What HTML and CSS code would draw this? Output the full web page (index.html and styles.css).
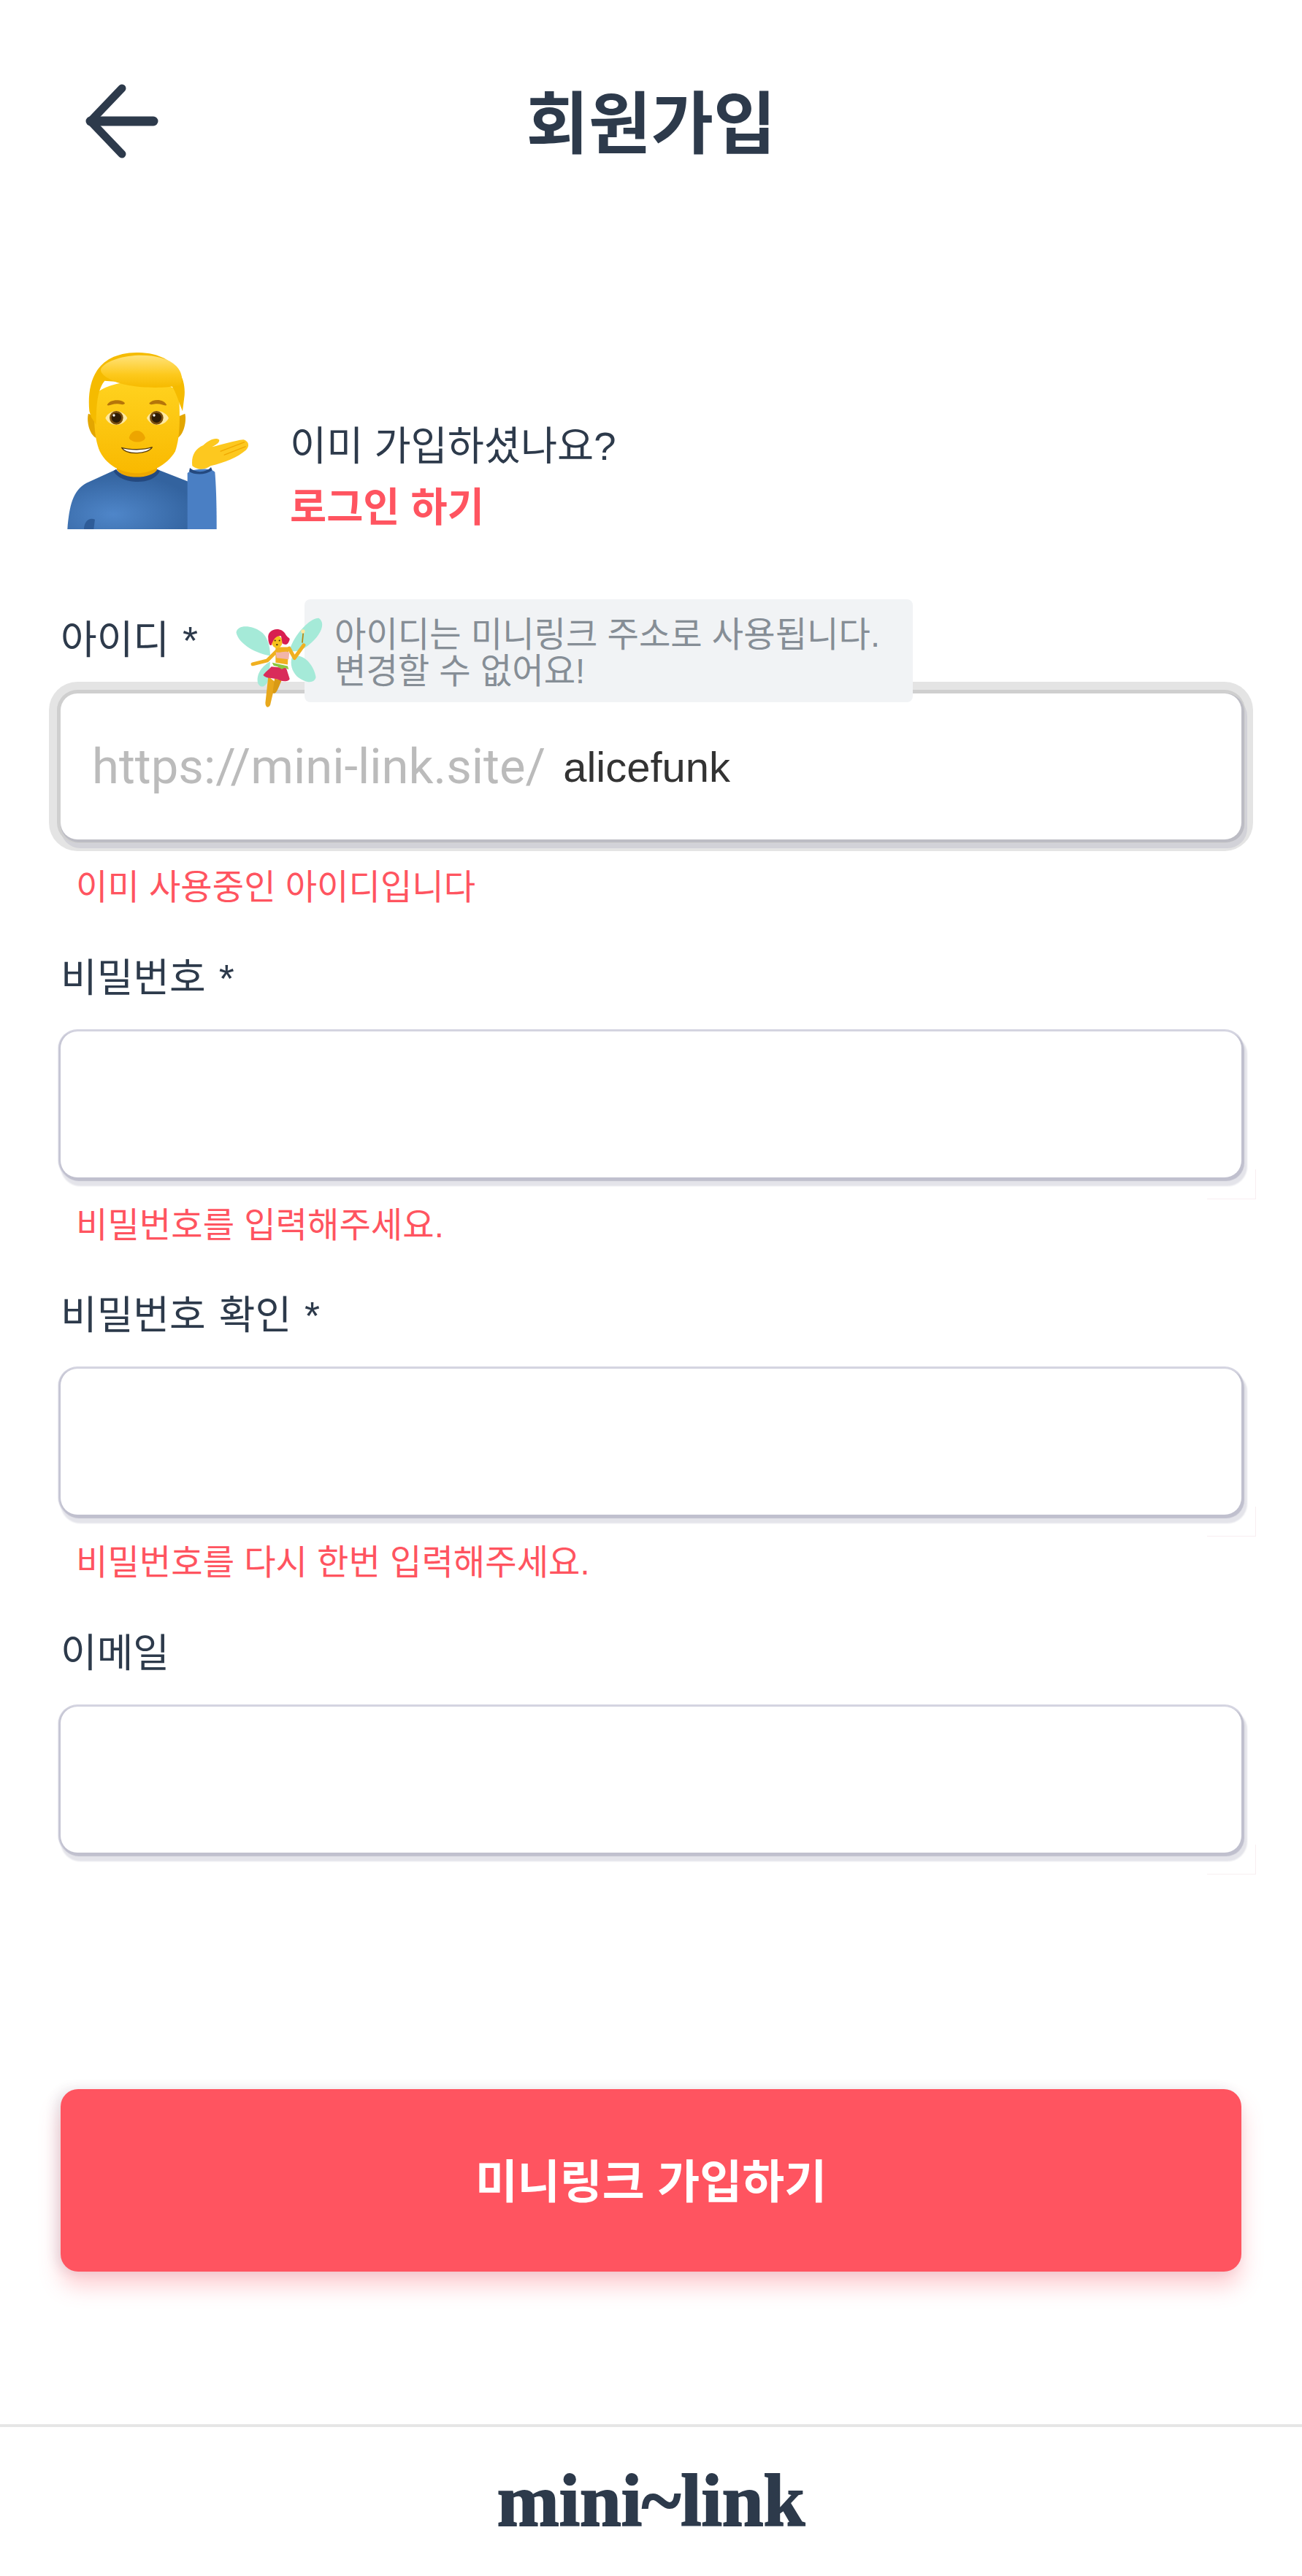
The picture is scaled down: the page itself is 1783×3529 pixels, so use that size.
FILE: index.html
```html
<!DOCTYPE html>
<html lang="ko">
<head>
    <meta charset="UTF-8">
    <meta name="viewport" content="width=device-width, initial-scale=1.0">
    <title>회원가입 - mini~link</title>
    <link rel="stylesheet" href="styles.css">
</head>
<body>

    <header class="top-bar">
        <a class="back-link" href="#" aria-label="뒤로">
            <svg width="100" height="102" viewBox="0 0 100 102" fill="none" stroke="#2d3a4b" stroke-linecap="round" stroke-linejoin="round">
                <path d="M50 6 L7 51 L50 96" stroke-width="11"/>
                <path d="M7 51 H93" stroke-width="13"/>
            </svg>
        </a>
        <h1 class="page-title">회원가입</h1>
    </header>

    <main class="signup">
        <section class="intro">
            <svg class="intro-man" width="249" height="242" viewBox="21 24 747 726">
                <defs>
                    <radialGradient id="sweater" cx="0.38" cy="0.75" r="0.7">
                        <stop offset="0" stop-color="#4f86c9"/>
                        <stop offset="1" stop-color="#33639f"/>
                    </radialGradient>
                    <linearGradient id="hair" x1="0" y1="0" x2="0" y2="1">
                        <stop offset="0" stop-color="#ffe27a"/>
                        <stop offset="0.6" stop-color="#fdc91c"/>
                        <stop offset="1" stop-color="#f6ba00"/>
                    </linearGradient>
                    <linearGradient id="skin" x1="0" y1="0" x2="0" y2="1">
                        <stop offset="0" stop-color="#ffd21f"/>
                        <stop offset="1" stop-color="#f9b900"/>
                    </linearGradient>
                </defs>
                <path d="M22 750 C30 650 45 590 100 560 L215 508 C260 560 350 560 400 508 L520 555 L520 750 Z" fill="url(#sweater)"/>
                <path d="M515 520 C530 500 610 495 628 515 C635 600 635 700 635 750 L515 750 Z" fill="#4a7fc4"/>
                <path d="M90 750 C90 720 110 700 135 710 L130 750 Z" fill="#2e5c98"/>
                <path d="M225 480 H390 V510 C365 550 250 550 225 505 Z" fill="#eda800"/>
                <path d="M212 510 C235 565 375 575 402 510 L392 503 C370 545 250 548 222 503 Z" fill="#24497f"/>
                <path d="M108 275 C100 300 110 360 140 375 L145 290 Z" fill="#e3a600"/>
                <path d="M505 275 C512 300 502 360 474 375 L470 290 Z" fill="#e3a600"/>
                <path d="M135 200 C130 300 130 370 155 430 C190 500 260 520 310 520 C360 520 430 490 465 430 C485 370 485 300 480 190 C430 120 180 130 135 200 Z" fill="url(#skin)"/>
                <path d="M112 265 C100 130 150 22 315 24 C450 26 510 110 503 200 L495 265 C480 230 470 190 450 160 L175 140 C150 170 140 220 140 320 L120 290 Z" fill="#f5bb00"/>
                <path d="M160 90 C200 30 400 10 470 80 C495 105 500 150 480 160 C400 175 250 170 190 130 C170 118 155 105 160 90 Z" fill="url(#hair)"/>
                <path d="M185 240 C195 215 245 215 258 232 C255 240 245 238 230 235 C210 232 195 245 185 240 Z" fill="#b5750a"/>
                <path d="M358 232 C375 212 420 215 430 240 C420 245 405 232 385 235 C370 238 360 240 358 232 Z" fill="#b5750a"/>
                <path d="M178 293 C195 255 250 255 268 293 C250 330 195 330 178 293 Z" fill="#ffe9a0"/>
                <path d="M348 293 C365 255 420 255 438 293 C420 330 365 330 348 293 Z" fill="#ffe9a0"/>
                <circle cx="223" cy="292" r="28" fill="#7a4e0e"/>
                <circle cx="223" cy="292" r="20" fill="#2e1c05"/>
                <circle cx="388" cy="292" r="28" fill="#7a4e0e"/>
                <circle cx="388" cy="292" r="20" fill="#2e1c05"/>
                <circle cx="213" cy="282" r="5" fill="#fff"/>
                <circle cx="378" cy="282" r="5" fill="#fff"/>
                <path d="M275 375 C285 335 330 335 342 375 C335 397 285 397 275 375 Z" fill="#eda500"/>
                <path d="M245 415 C280 425 335 425 370 413 C355 442 265 447 245 415 Z" fill="#fff" stroke="#5a3d0a" stroke-width="4" stroke-linejoin="round"/>
                <path d="M535 490 C530 450 545 420 580 405 C600 385 630 370 645 382 C650 392 630 405 615 412 C650 405 710 385 745 382 C770 390 770 410 755 425 C720 455 670 475 610 490 C590 505 560 510 535 490 Z" fill="#fdc81f"/>
                <path d="M650 430 L750 392 M665 445 L755 410" stroke="#f0a800" stroke-width="4" fill="none"/>
                <path d="M525 498 C550 520 590 518 612 495 L617 508 C590 528 545 528 522 513 Z" fill="#24497f"/>
            </svg>
            <div class="intro-text">
                <p class="intro-line">이미 가입하셨나요?</p>
                <a class="intro-login" href="#">로그인 하기</a>
            </div>
        </section>

        <form class="signup-form">
            <div class="field">
                <label class="field-label">아이디 *</label>
                <svg class="fairy" width="120" height="123" viewBox="100 78 358 370">
                    <path d="M240 235 C190 230 110 190 100 140 C105 105 165 110 200 135 C225 150 240 190 240 235 Z" fill="#a5ead8"/>
                    <path d="M320 210 C340 150 400 80 440 80 C470 100 450 150 400 190 C370 215 340 225 320 210 Z" fill="#a5ead8"/>
                    <path d="M240 260 C200 280 180 320 190 350 C205 375 225 360 235 330 Z" fill="#a5ead8"/>
                    <path d="M330 240 C370 220 420 270 428 325 C420 355 380 345 350 320 C330 300 320 270 330 240 Z" fill="#a5ead8"/>
                    <path d="M232 320 L220 430 C220 454 240 452 242 430 L262 345 Z" fill="#e8a81c"/>
                    <path d="M258 330 L250 388 C264 400 272 370 288 335 Z" fill="#d99a14"/>
                    <path d="M245 280 C232 295 215 306 211 316 C225 334 260 324 280 337 C300 344 320 340 320 330 L306 286 Z" fill="#d92c5a"/>
                    <path d="M268 215 L228 255 L168 270" stroke="#f0b020" stroke-width="15" stroke-linecap="round" stroke-linejoin="round" fill="none"/>
                    <path d="M318 205 L340 245 L378 192" stroke="#f0b020" stroke-width="15" stroke-linecap="round" stroke-linejoin="round" fill="none"/>
                    <path d="M262 200 L316 200 L312 272 L262 264 Z" fill="#f0b020"/>
                    <path d="M263 220 C280 226 300 212 319 222 L316 250 L266 244 Z" fill="#f2b5a8"/>
                    <path d="M248 264 L312 278 L316 292 L300 285 L288 291 L270 280 L254 276 Z" fill="#8cc63f"/>
                    <ellipse cx="268" cy="178" rx="22" ry="26" fill="#f7c21d"/>
                    <path d="M232 165 C225 125 285 110 305 150 C315 165 325 160 318 175 C310 195 300 190 290 185 L285 155 C270 150 255 160 245 192 C238 196 232 180 232 165 Z" fill="#d81e50"/>
                    <circle cx="260" cy="173" r="3" fill="#3a2a10"/>
                    <circle cx="278" cy="173" r="3" fill="#3a2a10"/>
                    <ellipse cx="268" cy="190" rx="4" ry="3" fill="#3a2a10"/>
                    <path d="M372 182 L376 142" stroke="#b8860b" stroke-width="5"/>
                    <circle cx="375" cy="135" r="8" fill="#ffe9a0"/>
                </svg>
                <div class="field-tip">아이디는 미니링크 주소로 사용됩니다.<br>변경할 수 없어요!</div>
                <div class="field-box field-box-focus">
                    <span class="field-prefix">https://mini-link.site/</span>
                    <input class="field-input" type="text" value="alicefunk">
                </div>
                <p class="field-error">이미 사용중인 아이디입니다</p>
            </div>

            <div class="field">
                <label class="field-label">비밀번호 *</label>
                <div class="field-box"><input class="field-input" type="password"></div>
                <p class="field-error">비밀번호를 입력해주세요.</p>
            </div>

            <div class="field">
                <label class="field-label">비밀번호 확인 *</label>
                <div class="field-box"><input class="field-input" type="password"></div>
                <p class="field-error">비밀번호를 다시 한번 입력해주세요.</p>
            </div>

            <div class="field">
                <label class="field-label">이메일</label>
                <div class="field-box"><input class="field-input" type="email"></div>
            </div>

            <button class="submit-btn" type="button">미니링크 가입하기</button>
        </form>
    </main>

    <footer class="site-footer">
        <span class="logo">mini~link</span>
    </footer>

</body>
</html>
```

FILE: styles.css
```css
* {
    box-sizing: border-box;
}

body {
    margin: 0;
    padding: 0;
    background-color: #fff;
    color: #2d3a4b;
    font-family: "Liberation Sans", "Noto Sans CJK KR", sans-serif;
}

/* header */
.top-bar {
    display: flex;
    align-items: center;
    justify-content: center;
    position: relative;
    height: 332px;
    padding-top: 10px;
}

.back-link {
    position: absolute;
    left: 117px;
    top: 115px;
    display: block;
    line-height: 0;
}

.page-title {
    margin: 0;
    font-size: 93px;
    font-weight: 700;
    line-height: 1;
}

/* main column */
.signup {
    padding: 0 83px;
}

.intro {
    display: flex;
    align-items: flex-end;
    gap: 56px;
    margin-top: 151px;
    margin-bottom: 101px;
    padding-left: 9px;
}

.intro-man {
    flex: none;
    margin-bottom: 13px;
}

.intro-line {
    margin: 0;
    font-size: 54.5px;
    line-height: 84px;
}

.intro-login {
    display: block;
    font-size: 54.5px;
    font-weight: 700;
    line-height: 84px;
    color: #ff5460;
    text-decoration: none;
}

/* form fields */
.field {
    position: relative;
    margin-bottom: 53.5px;
}

.field-label {
    display: block;
    padding-top: 2px;
    font-size: 54px;
    line-height: 72px;
    word-spacing: 3px;
    margin-bottom: 37px;
}

.field-tip {
    position: absolute;
    left: 334px;
    top: -18px;
    z-index: 2;
    width: 833px;
    height: 141px;
    padding: 24px 0 0 41px;
    background-color: #f1f3f5;
    border-radius: 8px;
    color: #868e96;
    font-size: 47.2px;
    line-height: 50px;
}

.fairy {
    position: absolute;
    left: 240px;
    top: 7px;
    z-index: 3;
}

.field-box {
    position: relative;
    display: flex;
    align-items: center;
    width: 1617px;
    height: 200px;
    padding: 0 43px;
    background-color: #fff;
    border-radius: 23px;
    box-shadow: 2px 3px 1px 2px #c0c0ce, -3px 0 2px 0 #c6c6d4, 0 0 0 3px #d6d6e2, 4px 8px 2px 4px #e4e4ea;
}

.field-box::after {
    content: "";
    position: absolute;
    right: -20px;
    bottom: -30px;
    width: 66px;
    height: 40px;
    border-right: 1px solid #f8eef1;
    border-bottom: 1px solid #f8eef1;
}

.field-box-focus {
    box-shadow: 2px 2px 0 2px #bcbcc4, 0 0 0 5px #cfcfcf, 4px 8px 0 4px #d2d2d8, 0 0 0 16px #e4e4e4;
}

.field-box-focus::after {
    display: none;
}

.field-prefix {
    flex: none;
    margin-right: 24px;
    color: #bbb;
    font-family: Roboto, "Liberation Sans", sans-serif;
    font-size: 67px;
}

.field-input {
    flex: 1;
    min-width: 0;
    padding: 0;
    border: 0;
    outline: 0;
    background: transparent;
    color: #333;
    font-family: inherit;
    font-size: 58px;
}

.field-error {
    margin: 33px 0 0 21px;
    color: #ff5460;
    font-size: 47.2px;
    line-height: 65px;
}

/* submit */
.submit-btn {
    display: block;
    width: 1617px;
    height: 250px;
    margin-top: 324.5px;
    padding: 0 0 8px;
    border: 0;
    border-radius: 24px;
    background-color: #ff5460;
    box-shadow: -6px 0 16px rgba(60, 60, 90, 0.12), 0 20px 30px rgba(255, 84, 96, 0.28);
    color: #fff;
    font-family: inherit;
    font-size: 63px;
    font-weight: 700;
}

/* footer */
.site-footer {
    display: flex;
    justify-content: center;
    margin-top: 209px;
    height: 208px;
    padding-top: 50px;
    border-top: 4px solid #e6e6e6;
}

.logo {
    font-family: "Liberation Serif", serif;
    font-size: 102px;
    font-weight: 700;
    line-height: 102px;
    color: #2d3a4b;
    -webkit-text-stroke: 2px #2d3a4b;
}
```
